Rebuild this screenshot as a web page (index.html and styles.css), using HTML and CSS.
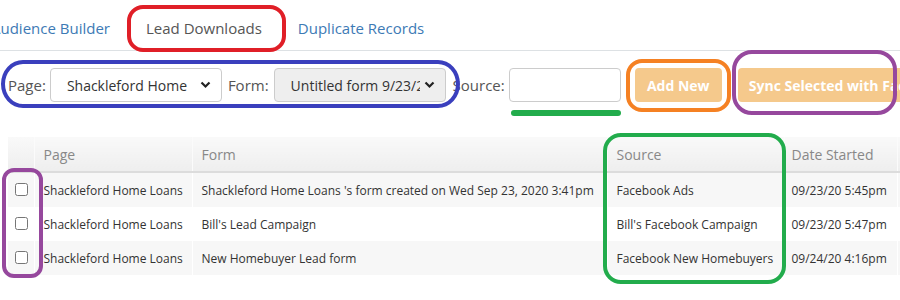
FILE: index.html
```html
<!DOCTYPE html>
<html>
<head>
<meta charset="utf-8">
<title>Lead Downloads</title>
<link rel="stylesheet" href="styles.css">
</head>
<body>
<div class="page">
  <ul class="tabs">
    <li class="tab"><a>Audience Builder</a></li>
    <li class="tab active"><a>Lead Downloads</a></li>
    <li class="tab"><a>Duplicate Records</a></li>
  </ul>

  <div class="filters">
    <label class="lbl lbl-page">Page:</label>
    <div class="select sel-page">
      <span class="sel-text">Shackleford Home</span>
      <svg class="chev" width="11" height="8" viewBox="0 0 11 8"><path d="M1.5 1.5 L5.5 5.5 L9.5 1.5" fill="none" stroke="#222" stroke-width="2.2"/></svg>
    </div>
    <label class="lbl lbl-form">Form:</label>
    <div class="select sel-form">
      <span class="sel-text">Untitled form 9/23/2020 3:41pm</span>
      <svg class="chev" width="11" height="8" viewBox="0 0 11 8"><path d="M1.5 1.5 L5.5 5.5 L9.5 1.5" fill="none" stroke="#222" stroke-width="2.2"/></svg>
    </div>
    <label class="lbl lbl-source">Source:</label>
    <input class="source-input" type="text">
    <button class="btn btn-add">Add New</button>
    <button class="btn btn-sync">Sync Selected with Facebook</button>
  </div>

  <table class="leads">
    <colgroup>
      <col class="c-check"><col class="c-page"><col class="c-form"><col class="c-source"><col class="c-date"><col class="c-extra">
    </colgroup>
    <thead>
      <tr><th></th><th>Page</th><th>Form</th><th>Source</th><th>Date Started</th><th></th></tr>
    </thead>
    <tbody>
      <tr class="odd"><td class="cb"><input type="checkbox"></td><td>Shackleford Home Loans</td><td>Shackleford Home Loans 's form created on Wed Sep 23, 2020 3:41pm</td><td>Facebook Ads</td><td>09/23/20 5:45pm</td><td></td></tr>
      <tr><td class="cb"><input type="checkbox"></td><td>Shackleford Home Loans</td><td>Bill's Lead Campaign</td><td>Bill's Facebook Campaign</td><td>09/23/20 5:47pm</td><td></td></tr>
      <tr class="odd"><td class="cb"><input type="checkbox"></td><td>Shackleford Home Loans</td><td>New Homebuyer Lead form</td><td>Facebook New Homebuyers</td><td>09/24/20 4:16pm</td><td></td></tr>
    </tbody>
  </table>

  <div class="mark mark-red"></div>
  <div class="mark mark-blue"></div>
  <div class="mark mark-green-line"></div>
  <div class="mark mark-orange"></div>
  <div class="mark mark-purple-top"></div>
  <div class="mark mark-purple-left"></div>
  <div class="mark mark-green-box"></div>
</div>
</body>
</html>
```
FILE: styles.css
```css
html, body {
  margin: 0;
  padding: 0;
  background: #fff;
  overflow: hidden;
}
body {
  width: 900px;
  height: 300px;
  font-family: "Open Sans", "Liberation Sans", sans-serif;
  color: #333;
}
.page {
  position: relative;
  width: 900px;
  height: 300px;
  overflow: hidden;
}

/* tabs */
.tabs {
  list-style: none;
  margin: 0;
  padding: 8px 0 0 0;
  display: flex;
  border-bottom: 1px solid #dde1e4;
  margin-left: -26px;
}
.tab a {
  display: block;
  padding: 10px 17px 12px;
  margin-right: 2px;
  font-size: 15px;
  line-height: 20px;
  color: #3d7ab5;
}
.tab.active a {
  color: #555;
}

/* filter row */
.filters {
  display: flex;
  align-items: center;
  margin-top: 17px;
  padding-left: 8px;
  white-space: nowrap;
}
.filters > * { flex: none; }
.lbl {
  font-size: 15px;
  color: #555;
}
.select {
  box-sizing: border-box;
  height: 34px;
  width: 172px;
  border: 1px solid #ccc;
  border-radius: 4px;
  display: flex;
  align-items: center;
  padding: 0 10px 0 16px;
  font-size: 14px;
  color: #333;
  background: #fff;
}
.sel-text {
  flex: 1;
  overflow: hidden;
  white-space: nowrap;
  text-overflow: clip;
}
.chev { flex: none; margin-left: 4px; }
.sel-page { margin-left: 4px; margin-right: 6px; }
.sel-form { margin-left: 5px; margin-right: 7px; background: #eee; }
.source-input {
  box-sizing: border-box;
  width: 112px;
  height: 34px;
  margin: 0 0 0 4px;
  border: 1px solid #ccc;
  border-radius: 4px;
  background: #fff;
}
.btn {
  box-sizing: border-box;
  height: 34px;
  border: none;
  border-radius: 4px;
  background: #f5c98c;
  color: #fff;
  font-family: "Open Sans", "Liberation Sans", sans-serif;
  font-weight: 700;
  font-size: 14px;
  padding: 0 11px;
  white-space: nowrap;
}
.btn-add { width: 87px; margin-left: 14px; padding: 0; }
.btn-sync { margin-left: 16px; }

/* table */
.leads {
  margin: 35px 0 0 8px;
  border-collapse: collapse;
  table-layout: fixed;
  width: 989px;
  font-size: 12px;
}
.c-check { width: 26px; }
.c-page { width: 158px; }
.c-form { width: 415px; }
.c-source { width: 177px; }
.c-date { width: 113px; }
.c-extra { width: 100px; }
.leads th {
  height: 34px;
  text-align: left;
  font-weight: 400;
  font-size: 14px;
  color: #888;
  padding: 0 9px;
  background: linear-gradient(#f9f9f9, #eeeeee);
  border-left: 1px solid #fbfbfb;
  border-bottom: 2px solid #dcdcdc;
}
.leads td {
  height: 34px;
  padding: 0 9px;
  white-space: nowrap;
  overflow: hidden;
  border-left: 1px solid #fff;
  color: #333;
}
.leads td:nth-child(5), .leads th:nth-child(5) { padding-left: 7px; }
.leads tr.odd td { background: #f7f7f7; }
.leads td.cb { padding: 0 0 0 7px; }
.leads td.cb input { margin: 2px 0 0 0; width: 13px; height: 13px; }
.leads th:first-child, .leads td:first-child { border-left: none; }

/* annotation marks */
.mark {
  position: absolute;
  box-sizing: border-box;
  border: 4px solid;
}
.mark-red {
  left: 127px; top: 5px; width: 159px; height: 47px;
  border-color: #e01f27;
  border-radius: 16px;
}
.mark-blue {
  left: 1px; top: 60px; width: 459px; height: 48px;
  border-color: #3a3fbd;
  border-radius: 22px / 24px;
}
.mark-green-line {
  left: 511px; top: 110px; width: 110px; height: 6px;
  border: none;
  background: #22ac4c;
  border-radius: 3px;
}
.mark-orange {
  left: 626px; top: 59px; width: 105px; height: 53px;
  border-color: #f58123;
  border-radius: 16px;
}
.mark-purple-top {
  left: 732px; top: 50px; width: 165px; height: 65px;
  border-color: #96489d;
  border-radius: 20px;
}
.mark-purple-left {
  left: 2px; top: 168px; width: 41px; height: 110px;
  border-color: #96489d;
  border-radius: 12px;
}
.mark-green-box {
  left: 603px; top: 133px; width: 183px; height: 151px;
  border-color: #22ac4c;
  border-radius: 18px;
}
```
